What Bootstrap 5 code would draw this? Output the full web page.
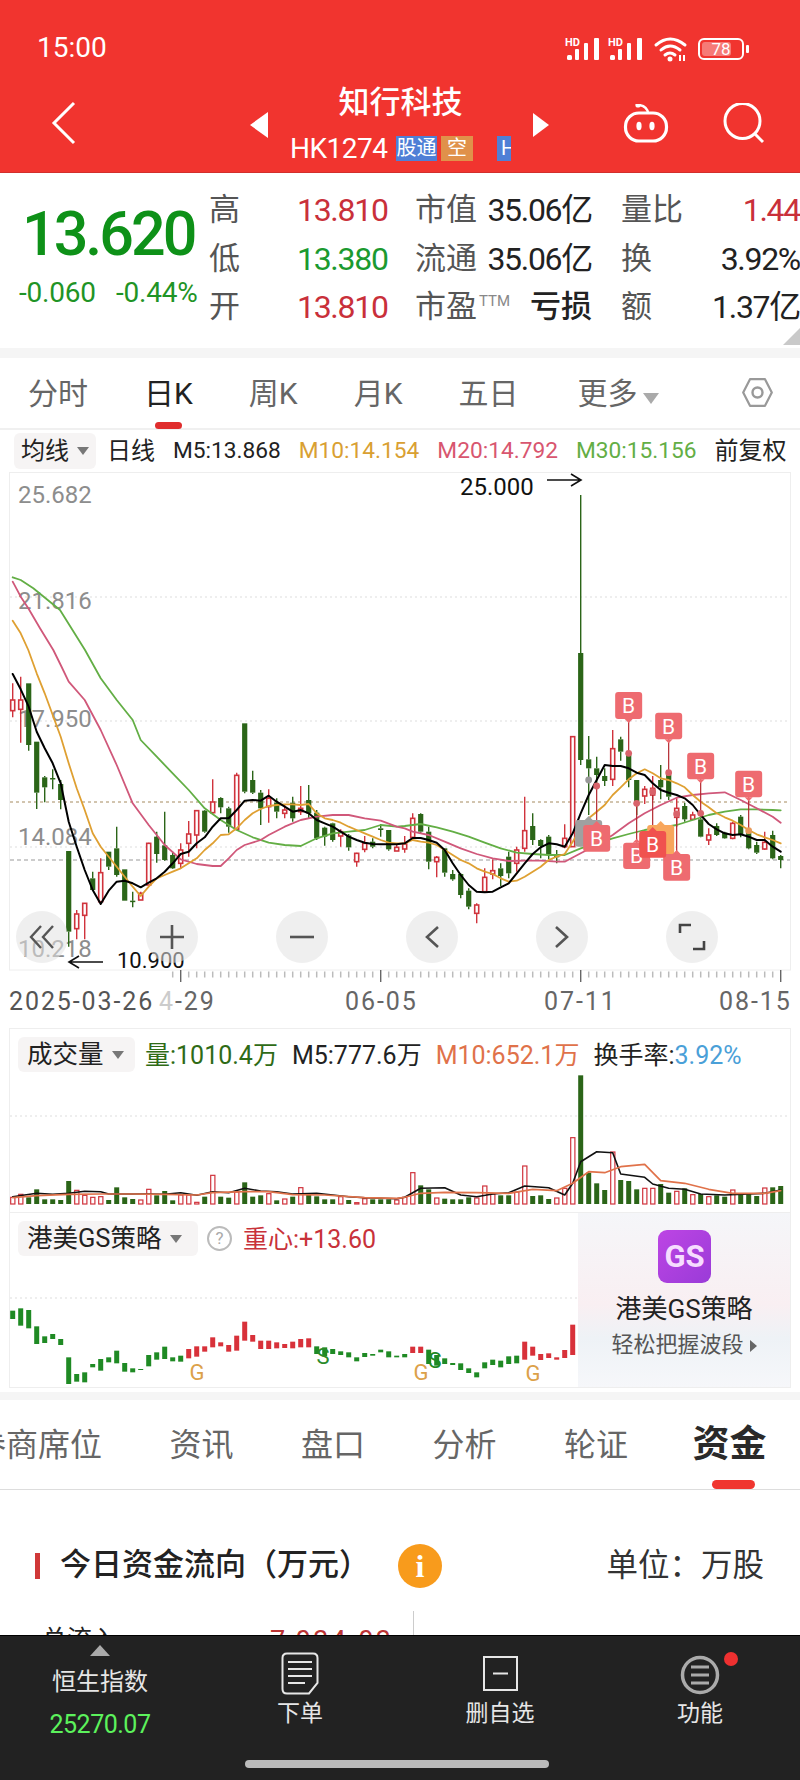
<!DOCTYPE html>
<html lang="zh-CN">
  <head>
    <meta charset="UTF-8" />
    <meta name="viewport" content="width=device-width, initial-scale=1.0" />
    <title>知行科技</title>
    <link href="https://cdn.jsdelivr.net/npm/bootstrap@5.3.0/dist/css/bootstrap.min.css" rel="stylesheet" />
    <style>
      body { width: 800px; height: 1780px; overflow: hidden; background: #fff; color: #222; font-family: Roboto, "Noto Sans CJK SC", sans-serif; }
      svg { display: block; }
      svg text { font-family: Roboto, "Noto Sans CJK SC", sans-serif; }

      .top-red { background: #f1342f; height: 173px; color: #fff; border-bottom: 1px solid #d22f2c; }
      .status-row { height: 78px; padding: 18px 0 0 37px; }
      .clock { font-size: 28px; }
      .status-icons { margin-left: auto; margin-right: 45px; }
      .nav-row { height: 94px; padding-left: 51px; }
      .back-slot { width: 199px; }
      .back-slot svg { margin-top: -4px; }
      .stock-stack { width: 221px; margin: 0 22px; }
      .stock-name { font-size: 31px; line-height: 44px; font-weight: 500; margin-top: 3px; }
      .stock-sub { height: 34px; margin-top: 7px; overflow: hidden; width: 221px; }
      .stock-code { font-size: 28px; line-height: 34px; letter-spacing: -.5px; width: 106px; }
      .tag-blue, .tag-orange { height: 25px; margin-top: 4px; font-size: 20px; line-height: 25px; color: #fff; text-align: center; overflow: hidden; white-space: nowrap; }
      .tag-blue { background: #4f7fd6; }
      .tag-orange { background: #e0914a; width: 32px; margin-left: 4px; }
      .tag-cut1 { width: 41px; }
      .tag-cut2 { width: 14px; margin-left: 24px; text-align: left; padding-left: 4px; }
      .bot-slot { margin-left: 72px; margin-right: 54px; }

      .quote-box { height: 175px; }
      .price-col { width: 209px; padding: 30px 0 0 19px; flex-shrink: 0; }
      .big-price { font-size: 61px; line-height: 62px; letter-spacing: -3px; font-weight: 500; color: #0e9118; padding-left: 3px; }
      .price-diff { margin-top: 13px; font-size: 28px; line-height: 30px; color: #1f9426; letter-spacing: -.2px; gap: 20px; white-space: nowrap; }
      .quote-grid { display: grid; grid-template-columns: 59px 89px 177px 179px; column-gap: 29px; grid-auto-rows: 48.5px; padding-top: 13px; font-size: 32px; letter-spacing: -1.3px; align-items: center; white-space: nowrap; }
      .qlabel { color: #555; letter-spacing: 0; font-size: 31px; }
      .qup { color: #c9303a; }
      .qdown { color: #1b9a30; }
      .qsplit { display: flex; justify-content: space-between; align-items: center; }
      .ttm { font-size: 15px; color: #888; vertical-align: 11px; letter-spacing: 0; margin-left: 2px; }
      .loss-text { font-weight: 500; letter-spacing: 0; font-size: 31px; }
      .corner-mark { right: 0; bottom: 3px; width: 0; height: 0; border-left: 17px solid transparent; border-bottom: 17px solid #c9c9c9; }

      .gray-strip { background: #f5f5f5; height: 10px; }
      .period-tabs { height: 72px; padding-left: 28px; gap: 56px; font-size: 30px; color: #666; border-bottom: 2px solid #f0f0f0; }
      .period-on { color: #222; }
      .period-line { left: 155px; bottom: -1px; width: 27px; height: 7px; background: #e02d2d; border-radius: 4px; }
      .period-more { width: 61px; white-space: nowrap; margin-left: 3px; }
      .tri-down { display: inline-block; width: 0; height: 0; border-left: 6px solid transparent; border-right: 6px solid transparent; border-top: 8px solid #777; }
      .tri-more { border-left-width: 8px; border-right-width: 8px; border-top: 11px solid #aaa; margin-left: 6px; }
      .hex-icon { position: absolute; left: 742px; top: 378px; }

      .ma-row { height: 42px; padding-left: 14px; font-size: 22.7px; gap: 18px; white-space: nowrap; }
      .tool-pick { background: #f6f4f4; border-radius: 6px; height: 36px; display: flex; align-items: center; gap: 8px; color: #222; white-space: nowrap; }
      .pick-ma { width: 82px; padding-left: 7px; font-size: 24px; margin-right: -7px; }
      .ma-day { font-size: 24px; }
      .c-m10 { color: #d9a032; }
      .c-m20 { color: #d8566f; }
      .c-m30 { color: #63ae45; }
      .c-m72 { color: #e0724a; }
      .fq-text { font-size: 24px; }

      .main-chart { height: 510px; }
      .zoom-row { left: 16px; top: 439px; gap: 78px; }
      .zoom-btn { width: 52px; height: 52px; background: rgba(225,225,225,.55); }
      .date-row { display: grid; grid-template-columns: 150px 186px 199px 175px 70px; padding-left: 9px; height: 36px; line-height: 40px; font-size: 25px; letter-spacing: 1.9px; color: #666; white-space: nowrap; }
      .date-first { color: #555; }
      .date-fade { color: #ccc; }

      .sub-panel { margin: 10px 9px 0; border: 1px solid #eee; border-bottom: 0; }
      .sub-bar { height: 43px; padding: 8px 0 0 8px; font-size: 25px; white-space: nowrap; gap: 14px; }
      .pick-sub { height: 35px; font-size: 25.5px; padding-left: 9px; }
      .pick-vol { width: 117px; margin-right: -4px; }
      .c-volg { color: #2f6b16; }
      .c-blue { color: #4aa0d8; }
      .gs-panel { margin: 0 9px; border: 1px solid #eee; height: 176px; }
      .gs-left { width: 568px; }
      .pick-gs { width: 180px; }
      .gs-help { width: 25px; height: 25px; border: 2px solid #bbb; color: #aaa; font-size: 17px; line-height: 21px; text-align: center; margin: 5px 0 0 -5px; }
      .c-heart { color: #c8323a; font-size: 25px; margin-left: -3px; }
      .gs-ad { flex: 1; background: linear-gradient(180deg, #f5f6f9 0%, #f9eff2 52%, #eef2f6 72%, #f6f7fa 100%); padding-top: 17px; }
      .gs-logo { width: 53px; height: 53px; border-radius: 9px; background: linear-gradient(135deg, #bd45e4, #9a3bd8); color: #f6dcff; font-weight: 700; font-size: 31px; line-height: 53px; text-align: center; margin-left: 1px; }
      .gs-title { font-size: 26px; line-height: 36px; margin-top: 8px; color: #222; }
      .gs-note { font-size: 22px; line-height: 30px; margin-top: 3px; color: #555; white-space: nowrap; }
      .tri-right { display: inline-block; width: 0; height: 0; border-top: 6px solid transparent; border-bottom: 6px solid transparent; border-left: 7px solid #666; margin-left: 6px; }

      .tail-strip { margin-top: 4px; height: 8px; background: #f5f5f5; }
      .detail-tabs { height: 90px; gap: 67.5px; margin-left: -26px; font-size: 32px; color: #666; border-bottom: 1px solid #ddd; white-space: nowrap; }
      .detail-on { font-size: 37px; font-weight: 700; color: #2a2a2a; margin-left: -3px; }
      .detail-line { left: 712px; top: 1480px; width: 43px; height: 9px; background: #f0362f; border-radius: 5px; }
      .flow-box { height: 145px; overflow: hidden; padding: 52px 36px 0 35px; }
      .flow-bar { width: 5px; height: 26px; background: #d03838; }
      .flow-title { font-size: 31px; font-weight: 500; margin-left: 20px; color: #222; white-space: nowrap; }
      .flow-info { width: 44px; height: 44px; background: #f89b1c; color: #fff; font-family: "Liberation Serif", serif; font-size: 32px; font-weight: 700; line-height: 44px; text-align: center; margin-left: 28px; }
      .flow-unit { margin-left: auto; font-size: 31.5px; color: #333; white-space: nowrap; }
      .flow-cut { height: 40px; margin-top: 32px; font-size: 25px; position: relative; white-space: nowrap; }
      .flow-cut-name { padding-left: 7px; width: 235px; }
      .flow-cut-val { color: #b33; font-size: 27px; letter-spacing: 2.5px; }
      .flow-cut-rule { position: absolute; left: 378px; top: -10px; width: 1px; height: 30px; background: #ccc; }

      .foot-bar { background: #222; height: 145px; border-top: 1px solid #000; color: #e6e6e6; }
      .foot-row { height: 124px; }
      .foot-name { font-size: 23px; line-height: 30px; }
      .foot-index { font-size: 24px; line-height: 30px; margin-top: 1px; }
      .foot-num { font-size: 25px; line-height: 30px; margin-top: 13px; color: #5cf25c; letter-spacing: -.5px; }
      .foot-tri { width: 0; height: 0; border-left: 10px solid transparent; border-right: 10px solid transparent; border-bottom: 11px solid #aaa; margin: 9px auto 11px; }
      .foot-dot { left: 124px; top: 16px; width: 14px; height: 14px; background: #ee3030; }
      .icon-order { margin-top: 16px; }
      .name-order { margin-top: 4px; }
      .icon-watch { margin-top: 20px; }
      .name-watch { margin-top: 8px; }
      .icon-func { margin-top: 19px; }
      .name-func { margin-top: 4px; }
      .home-line { width: 304px; height: 8px; margin-left: 245px; background: #bbb; border-radius: 4px; }
    </style>
  </head>
  <body>
    <!-- header -->
    <header class="top-red">
      <div class="status-row d-flex align-items-center">
        <span class="clock">15:00</span>
        <svg class="status-icons" width="195" height="35" viewBox="560 30 195 35" fill="#fff">
          <text x="565" y="45" font-size="11" font-weight="700">HD</text>
          <rect x="567" y="54" width="5" height="5" rx="1.5" /><rect x="575" y="48" width="4" height="11" rx="1" /><rect x="584" y="42" width="4" height="17" rx="1" /><rect x="594" y="37" width="5" height="22" rx="1" />
          <text x="608" y="45" font-size="11" font-weight="700">HD</text>
          <rect x="610" y="54" width="5" height="5" rx="1.5" /><rect x="618" y="48" width="4" height="11" rx="1" /><rect x="627" y="42" width="4" height="17" rx="1" /><rect x="637" y="37" width="5" height="22" rx="1" />
          <g fill="none" stroke="#fff" stroke-width="3" stroke-linecap="round">
            <path d="M656 44 Q670 32 685 44" /><path d="M661 49 Q670 41 680 49" /><path d="M665 54 Q670 50 675 54" />
          </g>
          <circle cx="670" cy="58" r="2.5" /><rect x="679" y="54" width="2" height="6" /><rect x="683" y="54" width="2" height="6" />
          <rect x="699" y="38" width="44" height="20" rx="5" fill="none" stroke="#fff" stroke-width="2" />
          <rect x="702" y="41" width="29" height="14" rx="3" fill="#fff" fill-opacity=".35" />
          <rect x="746" y="44" width="3" height="8" rx="1" />
          <text x="721" y="54" font-size="17" text-anchor="middle">78</text>
        </svg>
      </div>
      <div class="nav-row d-flex align-items-center">
        <div class="back-slot">
          <svg width="26" height="44" viewBox="0 0 26 44"><path d="M23 2 L3 22 L23 42" fill="none" stroke="#fff" stroke-width="3" /></svg>
        </div>
        <svg width="18" height="26" viewBox="0 0 18 26"><path d="M18 0 V26 L0 13 Z" fill="#fff" /></svg>
        <div class="stock-stack d-flex flex-column align-items-center align-self-start">
          <div class="stock-name">知行科技</div>
          <div class="stock-sub d-flex">
            <span class="stock-code">HK1274</span>
            <span class="tag-blue tag-cut1">股通</span>
            <span class="tag-orange">空</span>
            <span class="tag-blue tag-cut2">H</span>
          </div>
        </div>
        <svg width="16" height="24" viewBox="0 0 16 24"><path d="M0 0 V24 L16 12 Z" fill="#fff" /></svg>
        <svg class="bot-slot" width="48" height="42" viewBox="622 106 48 42">
          <circle cx="639" cy="107" r="2.6" fill="#fff" />
          <path d="M640 107 Q648 108 649 115" fill="none" stroke="#fff" stroke-width="2.4" />
          <rect x="626.5" y="115" width="41" height="28" rx="13.5" fill="none" stroke="#fff" stroke-width="3.2" />
          <ellipse cx="640" cy="128" rx="2.6" ry="4.2" fill="#fff" /><ellipse cx="653" cy="128" rx="2.6" ry="4.2" fill="#fff" />
        </svg>
        <svg width="44" height="44" viewBox="720 105 44 44">
          <circle cx="739.5" cy="123" r="17.5" fill="none" stroke="#fff" stroke-width="3" />
          <path d="M752 136 L760 144" stroke="#fff" stroke-width="3" />
        </svg>
      </div>
    </header>

    <!-- quote -->
    <section class="quote-box d-flex position-relative">
      <div class="price-col">
        <div class="big-price">13.620</div>
        <div class="price-diff d-flex"><span>-0.060</span><span>-0.44%</span></div>
      </div>
      <div class="quote-grid">
        <span class="qlabel">高</span><span class="qup">13.810</span>
        <span class="qsplit"><span class="qlabel">市值</span><span>35.06亿</span></span>
        <span class="qsplit"><span class="qlabel">量比</span><span class="qup">1.44</span></span>
        <span class="qlabel">低</span><span class="qdown">13.380</span>
        <span class="qsplit"><span class="qlabel">流通</span><span>35.06亿</span></span>
        <span class="qsplit"><span class="qlabel">换</span><span>3.92%</span></span>
        <span class="qlabel">开</span><span class="qup">13.810</span>
        <span class="qsplit"><span class="qlabel">市盈<span class="ttm">TTM</span></span><span class="loss-text">亏损</span></span>
        <span class="qsplit"><span class="qlabel">额</span><span>1.37亿</span></span>
      </div>
      <span class="corner-mark position-absolute"></span>
    </section>
    <div class="gray-strip"></div>

    <!-- period tabs -->
    <nav class="period-tabs d-flex align-items-center position-relative">
      <span>分时</span>
      <span class="period-on">日K</span>
      <span>周K</span>
      <span>月K</span>
      <span>五日</span>
      <span class="period-more">更多<span class="tri-down tri-more"></span></span>
      <span class="period-line position-absolute"></span>
    </nav>
    <svg class="hex-icon" width="31" height="29" viewBox="0 0 31 29"><path d="M8 1.2 H23 L29.8 14.5 L23 27.8 H8 L1.2 14.5 Z" fill="none" stroke="#999" stroke-width="2.2" stroke-linejoin="round" /><circle cx="15.5" cy="14.5" r="5" fill="none" stroke="#999" stroke-width="2.4" /></svg>

    <div class="ma-row d-flex align-items-center">
      <span class="tool-pick pick-ma">均线<span class="tri-down"></span></span>
      <span class="ma-day">日线</span>
      <span>M5:13.868</span>
      <span class="c-m10">M10:14.154</span>
      <span class="c-m20">M20:14.792</span>
      <span class="c-m30">M30:15.156</span>
      <span class="fq-text">前复权</span>
    </div>

    <!-- k line -->
    <div class="main-chart position-relative">
      <svg id="kChart" width="800" height="510" viewBox="0 472 800 510"></svg>
      <div class="zoom-row position-absolute d-flex">
        <span class="zoom-btn rounded-circle d-flex align-items-center justify-content-center">
          <svg width="26" height="26" viewBox="0 0 26 26"><path d="M12 2 L2 13 L12 24 M24 2 L14 13 L24 24" fill="none" stroke="#555" stroke-width="2.4" /></svg>
        </span>
        <span class="zoom-btn rounded-circle d-flex align-items-center justify-content-center">
          <svg width="26" height="26" viewBox="0 0 26 26"><path d="M13 1 V25 M1 13 H25" stroke="#555" stroke-width="2.6" /></svg>
        </span>
        <span class="zoom-btn rounded-circle d-flex align-items-center justify-content-center">
          <svg width="26" height="26" viewBox="0 0 26 26"><path d="M1 13 H25" stroke="#555" stroke-width="2.6" /></svg>
        </span>
        <span class="zoom-btn rounded-circle d-flex align-items-center justify-content-center">
          <svg width="16" height="26" viewBox="0 0 16 26"><path d="M14 3 L3 13 L14 23" fill="none" stroke="#555" stroke-width="2.6" /></svg>
        </span>
        <span class="zoom-btn rounded-circle d-flex align-items-center justify-content-center">
          <svg width="16" height="26" viewBox="0 0 16 26"><path d="M2 3 L13 13 L2 23" fill="none" stroke="#555" stroke-width="2.6" /></svg>
        </span>
        <span class="zoom-btn rounded-circle d-flex align-items-center justify-content-center">
          <svg width="30" height="30" viewBox="0 0 30 30"><path d="M14 3 H3 V11 M27 19 V27 H16" fill="none" stroke="#444" stroke-width="2.6" /></svg>
        </span>
      </div>
    </div>
    <div class="date-row">
      <span class="date-first">2025-03-26</span>
      <span><span class="date-fade">4</span>-29</span>
      <span>06-05</span>
      <span>07-11</span>
      <span>08-15</span>
    </div>

    <!-- volume -->
    <div class="sub-panel">
      <div class="sub-bar d-flex">
        <span class="tool-pick pick-sub pick-vol">成交量<span class="tri-down"></span></span>
        <span class="c-volg">量:1010.4万</span>
        <span>M5:777.6万</span>
        <span class="c-m72">M10:652.1万</span>
        <span>换手率:<span class="c-blue">3.92%</span></span>
      </div>
      <svg id="volChart" width="780" height="140" viewBox="10 1072 780 140"></svg>
    </div>

    <!-- GS -->
    <div class="gs-panel d-flex">
      <div class="gs-left">
        <div class="sub-bar d-flex align-items-start">
          <span class="tool-pick pick-sub pick-gs">港美GS策略<span class="tri-down"></span></span>
          <span class="gs-help rounded-circle">?</span>
          <span class="c-heart">重心:+13.60</span>
        </div>
        <svg id="gsChart" width="568" height="131" viewBox="10 1257 568 131"></svg>
      </div>
      <div class="gs-ad d-flex flex-column align-items-center">
        <div class="gs-logo">GS</div>
        <div class="gs-title">港美GS策略</div>
        <div class="gs-note">轻松把握波段<span class="tri-right"></span></div>
      </div>
    </div>
    <div class="tail-strip"></div>

    <!-- lower tabs -->
    <nav class="detail-tabs d-flex align-items-center">
      <span>券商席位</span>
      <span>资讯</span>
      <span>盘口</span>
      <span>分析</span>
      <span>轮证</span>
      <span class="detail-on">资金</span>
    </nav>
    <span class="detail-line position-absolute"></span>

    <section class="flow-box">
      <div class="d-flex align-items-center">
        <span class="flow-bar"></span>
        <span class="flow-title">今日资金流向（万元）</span>
        <span class="flow-info rounded-circle">i</span>
        <span class="flow-unit">单位：万股</span>
      </div>
      <div class="flow-cut d-flex">
        <span class="flow-cut-name">总流入</span>
        <span class="flow-cut-val">7,034.03</span>
        <span class="flow-cut-rule"></span>
      </div>
    </section>

    <!-- footer -->
    <footer class="foot-bar">
      <div class="row g-0 foot-row text-center">
        <div class="col-3">
          <div class="foot-tri"></div>
          <div class="foot-index">恒生指数</div>
          <div class="foot-num">25270.07</div>
        </div>
        <div class="col-3 d-flex flex-column align-items-center">
          <svg class="icon-order" width="38" height="43" viewBox="0 0 38 43"><path d="M6 1.5 H32 Q36.5 1.5 36.5 6 V31 L28 41.5 H6 Q1.5 41.5 1.5 37 V6 Q1.5 1.5 6 1.5 Z" fill="none" stroke="#e6e6e6" stroke-width="2" /><path d="M7 10 H31 M7 17 H31 M7 24 H31 M7 31 H24" stroke="#e6e6e6" stroke-width="2" /></svg>
          <div class="foot-name name-order">下单</div>
        </div>
        <div class="col-3 d-flex flex-column align-items-center">
          <svg class="icon-watch" width="35" height="35" viewBox="0 0 35 35"><rect x="1" y="1" width="33" height="33" fill="none" stroke="#e6e6e6" stroke-width="2" /><path d="M10 17.5 H25" stroke="#e6e6e6" stroke-width="2" /></svg>
          <div class="foot-name name-watch">删自选</div>
        </div>
        <div class="col-3 d-flex flex-column align-items-center position-relative">
          <svg class="icon-func" width="40" height="40" viewBox="0 0 40 40"><circle cx="20" cy="20" r="17.5" fill="none" stroke="#aaa" stroke-width="3.5" /><path d="M11 12 H29 M11 20 H29 M11 28 H29" stroke="#aaa" stroke-width="3" /></svg>
          <div class="foot-name name-func">功能</div>
          <span class="foot-dot position-absolute rounded-circle"></span>
        </div>
      </div>
      <div class="home-line"></div>
    </footer>

    <script>
      // zoom readings: [hollow, high, top, bottom, low]
      const left = [[1,100,150,182,202],[1,80,150,178,278],[0,100,100,285,302],[0,275,275,428,477],[0,378,382,412,457],[0,358,384,388,418],[0,390,402,450,478],[0,603,603,845,890],[1,780,792,836,868],[1,760,760,796,868],[0,665,685,720,722],[1,625,668,755,762],[0,605,605,650,660],[0,530,595,675,680],[0,658,658,752,752],[0,725,752,755,772],[1,725,730,750,750],[1,578,580,705,705],[0,545,560,612,638],[0,485,586,630,632],[0,605,615,655,657],[1,580,600,640,657],[1,513,552,580,620],[1,480,482,555,595],[0,480,482,545,548],[1,388,456,488,495],[0,442,444,472,490],[0,470,475,530,548],[1,368,376,538,540],[0,220,220,425,430],[0,362,390,428,432],[0,420,428,475,525],[1,418,445,470,518],[0,445,458,485,505],[1,462,480,490,505],[0,440,458,505,515],[1,408,475,485,495],[0,405,450,490,505],[0,480,488,565,570],[0,530,533,560,587],[0,518,520,570,575],[1,538,545,558,590],[0,552,556,592,602],[1,608,610,635,650],[1,558,580,598,607],[0,565,575,590,595],[0,522,535,540,560],[0,540,540,598,602],[1,580,592,603,603]];
      const right = [[1,408,432,447,458],[1,340,355,412,415],[0,340,342,395,400],[0,380,395,485,508],[1,468,472,485,532],[0,445,445,518,530],[0,510,522,538,542],[0,520,522,585,595],[0,565,572,620,628],[1,610,615,640,670],[1,505,532,575,578],[1,478,512,522,538],[0,490,505,528,558],[0,455,470,520,535],[1,440,450,490,515],[1,290,392,445,455],[0,340,378,420,435],[0,418,420,438,475],[0,405,410,462,478],[0,450,462,472,490],[1,373,415,440,445],[1,108,110,440,440],[0,-615,-141,180,195],[0,108,178,205,345],[0,170,205,225,260],[0,205,228,243,258],[1,90,146,238,258],[0,110,118,155,182],[0,160,165,240,262],[0,240,240,305,345],[1,258,268,288,312],[1,228,265,285,300],[0,195,240,262,298],[0,215,225,290,300],[1,295,325,352,380],[0,308,318,358,365],[1,335,345,358,360],[0,345,358,410,412],[1,385,405,420,435],[0,370,378,405,408],[0,395,398,415,416],[1,365,370,415,418],[0,345,350,405,412],[0,390,395,445,448],[0,425,435,458,462],[1,395,427,447,450],[0,392,405,475,478],[0,465,468,480,505]];

      const RED = '#d0333c', GREEN = '#2b6518';
      const kx = i => 12.7 + 8 * i;
      const pts3 = a => a.map(p => (p[0] / 3).toFixed(1) + ',' + (650 + p[1] / 3).toFixed(1)).join(' ');
      const pts5 = a => a.map(p => (400 + p[0] / 3).toFixed(1) + ',' + (700 + p[1] / 3).toFixed(1)).join(' ');
      const poly = (pts, c, w) => `<polyline points="${pts}" fill="none" stroke="${c}" stroke-width="${w}" stroke-linejoin="round" stroke-linecap="round"/>`;
      const pairs = s => s.trim().split(/\s+/).map(t => t.split(',').map(Number));

      function candle(i, d, base) {
        const x = kx(i), y = v => base + v / 3;
        const [hollow, hi, top, bot, lo] = d;
        const c = hollow ? RED : GREEN;
        let s = `<path d="M${x} ${y(hi)} V${y(top)} M${x} ${y(bot)} V${y(lo)}" stroke="${c}" stroke-width="1.4"/>`;
        if (hollow) s += `<rect x="${x - 2}" y="${y(top)}" width="4" height="${Math.max(y(bot) - y(top), 1)}" fill="#fff" stroke="${c}" stroke-width="1.6"/>`;
        else s += `<rect x="${x - 2.6}" y="${y(top)}" width="5.2" height="${Math.max(y(bot) - y(top), 1.5)}" fill="${c}"/>`;
        return s;
      }

      // marker given in zoom-5 coords of its box
      function mark(zx, ztop, zbot, down, fill, label) {
        const x = 400 + zx / 3, t = 700 + ztop / 3, b = 700 + zbot / 3;
        const tip = down ? `M${x - 4} ${b} L${x} ${b + 4} L${x + 4} ${b} Z` : `M${x - 4} ${t} L${x} ${t - 4} L${x + 4} ${t} Z`;
        return `<path d="${tip}" fill="${fill}"/><rect x="${x - 13.5}" y="${t}" width="27" height="${b - t}" rx="3" fill="${fill}"/>` +
          (label ? `<text x="${x}" y="${(t + b) / 2 + 7.5}" font-size="21" fill="#fff" text-anchor="middle">B</text>` : '');
      }
      const stem = (zx, a, b) => `<path d="M${400 + zx / 3} ${700 + a / 3} V${700 + b / 3}" stroke="#b3282f" stroke-width="1.2"/>`;
      const dot = (zx, zy, c) => `<circle cx="${400 + zx / 3}" cy="${700 + zy / 3}" r="3.4" fill="${c}"/>`;

      let k = '';
      k += '<rect x="9.5" y="472.5" width="781" height="497.5" fill="none" stroke="#eee"/>';
      [597, 721, 847].forEach(y => { k += `<path d="M10 ${y} H790" stroke="#ddd" stroke-dasharray="2 3"/>`; });
      k += '<path d="M10 802 H790" stroke="#a58a5f" stroke-dasharray="3 3"/><path d="M10 860 H790" stroke="#999" stroke-dasharray="4 3"/>';
      [['25.682', 503], ['21.816', 609], ['17.950', 727], ['14.084', 845], ['10.218', 957]].forEach(a => {
        k += `<text x="18" y="${a[1]}" font-size="24" fill="#8d8d8d">${a[0]}</text>`;
      });

      left.forEach((d, i) => { k += candle(i, d, 650); });
      right.forEach((d, i) => { k += candle(i + 49, d, 700); });

      const m5a = pairs('38,72 62,118 86,170 110,245 134,295 158,340 182,400 206,515 230,590 254,660 278,720 302,762 326,722 350,695 374,692 398,700 422,712 446,698 470,685 494,665 518,640 542,612 566,605 590,580 614,562 638,530 662,505 686,505 710,480 734,452 758,450 782,452 806,437 830,455 854,470 878,485 902,480 926,490 950,510 974,520 998,530 1022,545 1046,560 1070,570 1094,578 1118,582 1142,583 1166,583 1190,583');
      const m5b = pairs('14,430 38,414 62,414 86,420 110,428 134,450 158,490 182,525 206,555 230,575 254,577 278,575 302,562 326,550 350,520 374,490 398,462 422,442 446,430 470,433 494,440 518,400 542,340 566,285 590,240 614,195 638,198 662,198 686,205 710,218 734,225 758,250 782,270 806,278 830,285 854,295 878,315 902,345 926,372 950,388 974,400 998,405 1022,403 1046,410 1070,420 1094,420 1118,440 1142,455');
      const m10a = pairs('38,-88 62,-50 85,0 110,70 134,130 158,195 182,260 206,340 230,415 254,480 278,550 302,590 326,620 350,650 374,680 398,710 422,738 446,710 470,685 494,675 518,665 542,655 566,640 590,625 614,600 638,580 662,555 686,553 710,535 734,510 758,490 782,477 806,468 830,465 854,463 878,463 902,465 926,462 950,490 974,505 998,510 1022,518 1046,530 1070,540 1094,550 1118,560 1142,570 1166,578 1190,580');
      const m10b = pairs('14,430 38,420 62,425 86,428 110,435 134,450 158,465 182,480 206,490 230,505 254,515 278,522 302,535 326,545 350,542 374,530 398,515 422,500 446,480 470,470 494,462 518,425 542,385 566,355 590,335 614,315 638,285 662,262 686,238 710,220 734,208 758,220 782,235 806,240 830,250 854,262 878,285 902,305 926,322 950,340 974,352 998,362 1022,375 1046,390 1070,403 1094,412 1118,420 1142,430');
      const m20a = pairs('38,-205 62,-160 85,-125 120,-65 160,0 182,45 206,95 254,150 302,240 350,345 398,460 446,525 494,585 542,628 590,642 638,648 662,648 686,625 710,600 734,585 782,570 806,555 854,530 902,510 950,500 998,495 1046,495 1094,505 1142,512 1190,530');
      const m20b = pairs('14,385 38,395 86,405 134,425 182,445 230,462 278,475 326,483 374,482 422,482 470,485 494,485 542,460 590,435 638,405 686,370 734,340 782,315 830,293 878,285 926,280 974,277 1022,300 1070,325 1118,350 1142,368');
      const m30a = pairs('38,-218 62,-210 100,-185 180,-120 255,0 302,85 350,150 398,210 422,270 470,320 518,370 566,420 614,475 662,510 710,540 758,562 806,578 854,585 902,588 950,565 998,550 1046,545 1094,540 1142,525 1190,530');
      const m30b = pairs('14,378 62,372 110,382 158,395 206,410 254,428 302,445 350,458 398,462 446,465 494,465 542,445 590,430 638,415 686,402 734,390 782,383 830,375 878,360 926,345 974,335 1022,328 1070,328 1118,330 1142,331');

      const drawMa = (a, b, c, w) => poly(pts3(a) + ' ' + pts5(b), c, w);
      k += drawMa(m30a, m30b, '#63ae45', 1.8);
      k += drawMa(m20a, m20b, '#d0587a', 1.8);
      k += drawMa(m10a, m10b, '#dfa032', 1.8);
      k += drawMa(m5a, m5b, '#000', 2);

      // buy points
      k += stem(686, 60, 160) + dot(686, 160, '#d9636b');
      k += stem(806, 118, 218) + dot(806, 218, '#d9636b');
      k += stem(902, 238, 340) + dot(902, 340, '#d9636b');
      k += stem(1046, 292, 395) + dot(1046, 392, '#e79a5a');
      k += stem(590, 258, 375) + dot(590, 258, '#d9636b');
      k += stem(710, 310, 428) + dot(710, 310, '#d9636b');
      k += stem(758, 275, 393) + dot(758, 275, '#d9636b');
      k += stem(830, 342, 462) + dot(830, 342, '#d9636b');
      k += dot(566, 240, '#999');
      k += mark(566, 360, 440, false, '#a0a0a0', false);
      k += mark(782, 375, 465, false, '#f8a65c', false);
      k += mark(686, -24, 57, true, '#ee6b70', true);
      k += mark(806, 38, 118, true, '#ee6b70', true);
      k += mark(902, 158, 238, true, '#ee6b70', true);
      k += mark(1046, 212, 292, true, '#ee6b70', true);
      k += mark(590, 375, 455, false, '#ee6b70', true);
      k += mark(710, 428, 507, false, '#ee6b70', true);
      k += mark(830, 462, 542, false, '#ee6b70', true);
      k += mark(758, 393, 473, false, '#f0524f', true);

      // high / low notes
      k += '<text x="460" y="495" font-size="24" fill="#111">25.000</text><path d="M547 480 H580 M571 474 L581 480 L571 486" fill="none" stroke="#111" stroke-width="1.6"/>';
      k += '<text x="117" y="968" font-size="22" fill="#111">10.900</text><path d="M103 962 H69 M79 956 L69 962 L79 968" fill="none" stroke="#111" stroke-width="1.6"/>';

      // date ticks
      for (let i = 20; i <= 96; i++) {
        if ((i - 21) % 25 === 0) k += `<path d="M${kx(i)} 970 V982" stroke="#666" stroke-width="1.4"/>`;
        else k += `<path d="M${kx(i)} 971.5 V977.5" stroke="#bbb" stroke-width="1.5"/>`;
      }
      document.getElementById('kChart').innerHTML = k;

      // volume, zoom y of bar top, baseline 552
      const volTops = [532,523,532,508,538,538,540,483,511,526,532,530,540,502,532,537,540,508,526,513,541,525,525,547,530,466,530,533,516,487,530,526,521,541,537,530,503,525,529,538,538,530,540,548,536,538,538,538,540,532,458,496,508,534,536,538,538,532,534,498,522,526,526,516,438,528,526,537,534,505,353,166,458,490,510,396,480,483,508,505,505,492,518,514,505,524,522,530,526,530,510,524,520,528,504,502,498];
      const volRed = [0,1,8,9,10,11,16,17,21,22,23,25,28,32,34,36,41,43,44,48,49,50,53,58,59,60,63,64,68,69,70,75,79,80,83,85,87,90,94];
      let v = '<path d="M10 1116 H790" stroke="#ddd" stroke-dasharray="2 3"/>';
      volTops.forEach((t, i) => {
        const x = kx(i), y = 1020 + t / 3, h = 1204 - y;
        if (volRed.includes(i)) v += `<rect x="${x - 2}" y="${y}" width="4.2" height="${h}" fill="#fff" stroke="${RED}" stroke-width="1.2"/>`;
        else v += `<rect x="${x - 2.5}" y="${y}" width="5" height="${h}" fill="${GREEN}"/>`;
      });
      const volPts = (a, b) => a.map(p => (p[0] / 3).toFixed(1) + ',' + (1020 + p[1] / 3).toFixed(1)).concat(b.map(p => (400 + p[0] / 3).toFixed(1) + ',' + (1020 + p[1] / 3).toFixed(1))).join(' ');
      v += poly(volPts(
        pairs('38,530 110,520 158,523 206,520 254,514 302,515 326,522 398,522 446,522 494,523 542,518 590,526 638,515 686,518 734,505 782,513 830,515 878,522 950,520 998,525 1046,530 1094,533 1190,536'),
        pairs('14,532 62,505 134,503 182,525 230,530 278,522 326,518 374,498 446,503 494,525 518,490 542,425 590,395 638,398 662,462 734,472 758,492 806,505 854,508 902,522 974,525 1046,522 1094,520 1142,510')), '#111', 1.6);
      v += poly(volPts(
        pairs('38,533 110,527 206,523 302,522 398,522 494,523 590,525 638,518 734,515 806,515 878,524 974,525 1094,533 1190,535'),
        pairs('14,532 62,520 134,517 230,518 326,520 398,508 470,512 518,490 566,455 614,458 662,440 734,433 782,482 854,490 926,508 998,520 1094,520 1142,512')), '#e0724a', 1.7);
      document.getElementById('volChart').innerHTML = v;

      // GS bars, [top, bottom, red]
      const gs = [[875,900],[868,920],[873,928],[922,975],[952,972],[945,960],[960,978],[1015,1095],[1065,1088],[1060,1090],[1035,1045],[1020,1055],[1015,1030],[995,1033],[1032,1058],[1048,1060],[1050,1053],[1008,1042],[1000,1022],[983,1020],[1015,1027],[1010,1028],[990,1018,1],[982,1013,1],[982,998,1],[955,985,1],[970,982,1],[978,998,1],[950,995,1],[908,965,1],[948,968,1],[965,990,1],[965,990,1],[970,988,1],[975,987,1],[968,988,1],[960,985,1],[958,985,1],[982,1005],[985,1012],[990,1005],[997,1008],[1000,1015],[1015,1027],[1002,1014],[1005,1010],[992,1000],[997,1015],[1010,1015],[1005,1015],[983,1002,1],[983,1002,1],[992,1035],[1008,1040],[1018,1035],[1032,1038],[1033,1053],[1048,1062],[1060,1075],[1030,1048],[1022,1038],[1025,1045],[1012,1035],[1010,1033],[968,1022,1],[983,1010,1],[1005,1023,1],[1003,1017,1],[1015,1022,1],[993,1017,1],[917,1008,1]];
      let g = '<path d="M10 1299 H578" stroke="#ddd" stroke-dasharray="2 3"/>';
      gs.forEach((d, i) => {
        const t = 1020 + d[0] / 3, b = 1020 + d[1] / 3;
        g += `<rect x="${kx(i) - 2.5}" y="${t}" width="5" height="${b - t}" fill="${d[2] ? '#d8313a' : '#1f8a24'}"/>`;
      });
      [[197, 1381, 'G', '#dca14a'], [323, 1365, 'S', '#2a8a2a'], [421, 1381, 'G', '#dca14a'], [435, 1369, 'S', '#1f8a24'], [533, 1382, 'G', '#dca14a']].forEach(a => {
        g += `<text x="${a[0]}" y="${a[1]}" font-size="22" fill="${a[3]}" text-anchor="middle">${a[2]}</text>`;
      });
      document.getElementById('gsChart').innerHTML = g;
    </script>
    <script src="https://cdn.jsdelivr.net/npm/bootstrap@5.3.0/dist/js/bootstrap.bundle.min.js"></script>
  </body>
</html>
